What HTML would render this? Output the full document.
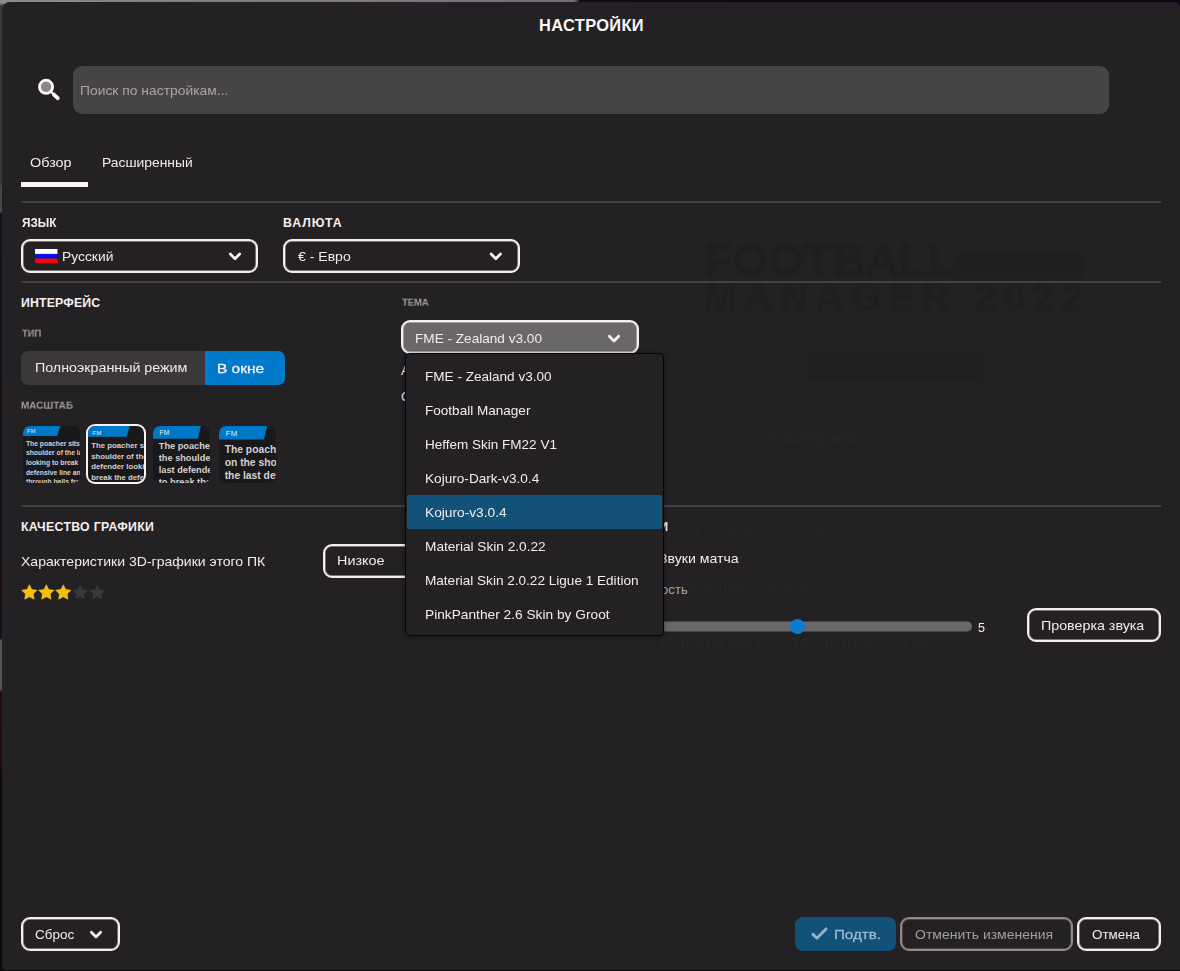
<!DOCTYPE html>
<html lang="ru">
<head>
<meta charset="utf-8">
<title>Настройки</title>
<style>
*{box-sizing:border-box;margin:0;padding:0}
html,body{width:1180px;height:971px;overflow:hidden;background:#0a090c}
body{font-family:"Liberation Sans",sans-serif;color:#f4ecec;font-size:14px;position:relative}
.abs{position:absolute;white-space:nowrap}
.tx{line-height:16px}
#bgtop{left:0;top:0;width:1180px;height:4px;background:linear-gradient(90deg,#8c8a8b 0,#7d7a7d 300px,#756f76 574px,#12091b 580px,#0e0717 1180px)}
#bgleft{left:0;top:0;width:4px;height:971px;background:linear-gradient(180deg,#8c8a8b 0,#8c8a8b 3px,#3b393c 6px,#39373a 184px,#474547 186px,#474547 212px,#0c0b0e 214px,#161418 216px,#141216 380px,#1e0a12 390px,#141216 420px,#141216 560px,#230a14 580px,#141216 610px,#141216 638px,#565456 641px,#565456 689px,#2a0c16 692px,#240a13 765px,#0a090c 775px,#0a090c 971px)}
#dialog{left:2px;top:2px;width:1179px;height:967.6px;background:#232123;border-radius:8px 8px 0 4px}
.hr{left:21px;width:1140px;height:2px;background:#434143}
.box{border:2px solid #f6eded;border-radius:9px;box-shadow:inset 0 0 0 .7px rgba(246,237,237,.55)}
.chev{width:13px;height:9px}
.thumb{top:425.5px;width:57px;height:57px;border-radius:7px;background:#19181b;overflow:hidden}
.thumb .bar{position:absolute;left:0;top:0;background:#0078c8}
.thumb .fm{position:absolute;color:#e8eef4;line-height:1;letter-spacing:.3px}
.thumb .ln{position:absolute;color:#d6d0d1;white-space:pre}
</style>
</head>
<body>
<div class="abs" id="bgtop"></div>
<div class="abs" id="bgleft"></div>
<div class="abs" id="dialog"></div>
<div class="abs" style="left:704px;top:236px;font-size:47px;line-height:48px;font-weight:bold;color:rgba(0,0,0,.095);letter-spacing:-.6px;filter:blur(1.2px)">FOOTBALL</div>
<div class="abs" style="left:958px;top:252px;width:124px;height:28px;background:rgba(0,0,0,.08);filter:blur(1.5px)"></div>
<div class="abs" style="left:704px;top:277px;font-size:40px;line-height:40px;font-weight:bold;color:rgba(0,0,0,.095);letter-spacing:6.6px;filter:blur(1.2px)">MANAGER 2022</div>
<div class="abs" style="left:807px;top:353px;width:176px;height:28px;border-radius:4px;background:rgba(0,0,0,.04)"></div>
<div class="abs" style="left:766px;top:431px;font-size:14px;font-weight:bold;color:rgba(255,255,255,.018);filter:blur(.5px)">ПОСЛЕДНЯЯ</div>
<div class="abs" style="left:644px;top:526px;font-size:17px;color:rgba(255,255,255,.02);letter-spacing:.9px;filter:blur(.6px)">НАЧАТЬ НОВУЮ ИГРУ</div>
<div class="abs" style="left:658px;top:581px;font-size:17px;color:rgba(255,255,255,.02);letter-spacing:.5px;filter:blur(.6px)">ЗАГРУЗИТЬ ИГРУ</div>
<div class="abs" style="left:660px;top:636px;font-size:16px;color:rgba(255,255,255,.02);letter-spacing:.2px;filter:blur(.6px)">ПОДКЛЮЧИТЬСЯ К ОНЛАЙН-ИГРЕ</div>
<div class="abs" style="left:660px;top:729px;font-size:15px;color:rgba(255,255,255,.02);letter-spacing:.5px">РЕЖИМ КАРЬЕРЫ</div>

<div class="abs tx" id="title" style="left:539px;top:17px;font-size:16.4px;color:#fbf6f6;font-weight:bold;letter-spacing:0.359px">НАСТРОЙКИ</div>

<!-- search -->
<svg class="abs" style="left:36px;top:77px" width="26" height="26" viewBox="0 0 26 26">
  <circle cx="10.05" cy="9.8" r="6.6" fill="#8c8788" stroke="#fdf6f5" stroke-width="2.8"/>
  <path d="M14.6 14.2 L18 17.6" stroke="#fdf6f5" stroke-width="2.2"/>
  <path d="M17.9 17.6 L21.7 21.1" stroke="#fdf6f5" stroke-width="3.9" stroke-linecap="round"/>
</svg>
<div class="abs" style="left:73px;top:66px;width:1036px;height:48px;background:#464445;border-radius:9px"></div>
<div class="abs tx" id="search" style="left:80px;top:83px;font-size:13px;color:#aaa5a7;transform:scaleX(1.0668);transform-origin:0 0">Поиск по настройкам...</div>

<!-- tabs -->
<div class="abs tx" id="tab1" style="left:30px;top:155px;font-size:13px;color:#f4ecec;transform:scaleX(1.1076);transform-origin:0 0">Обзор</div>
<div class="abs tx" id="tab2" style="left:102px;top:155px;font-size:13px;color:#f4ecec;transform:scaleX(1.0655);transform-origin:0 0">Расширенный</div>
<div class="abs" style="left:21px;top:182px;width:67px;height:5px;background:#fbf3f2"></div>
<div class="abs hr" style="top:201px"></div>

<!-- language / currency -->
<div class="abs tx" id="lang" style="left:22px;top:215px;font-size:12.3px;color:#f6efef;font-weight:bold;transform:scaleX(0.9541);transform-origin:0 0">ЯЗЫК</div>
<div class="abs tx" id="cur" style="left:283px;top:215px;font-size:12.3px;color:#f6efef;font-weight:bold;letter-spacing:0.939px">ВАЛЮТА</div>
<div class="abs box" style="left:21px;top:239px;width:237px;height:34px"></div>
<svg class="abs" style="left:35px;top:248.7px" width="22.5" height="14.4" viewBox="0 0 22.5 14.4"><rect width="22.5" height="5" fill="#ffffff"/><rect y="4.9" width="22.5" height="4.8" fill="#0a10f2"/><rect y="9.5" width="22.5" height="4.9" fill="#f5080c"/></svg>
<div class="abs tx" id="rus" style="left:62px;top:249px;font-size:13px;color:#f4ecec;transform:scaleX(1.0651);transform-origin:0 0">Русский</div>
<svg class="abs" style="left:227px;top:250px" width="17" height="13" viewBox="0 0 17 13"><path d="M3.35 4.10 L8.00 8.70 L12.65 4.10" fill="none" stroke="#fbf3f2" stroke-width="2.8" stroke-linecap="round" stroke-linejoin="round"/></svg>
<div class="abs box" style="left:283px;top:239px;width:237px;height:34px"></div>
<div class="abs tx" id="eur" style="left:298px;top:249px;font-size:13px;color:#f4ecec;transform:scaleX(1.0795);transform-origin:0 0">€ - Евро</div>
<svg class="abs" style="left:487px;top:250px" width="17" height="13" viewBox="0 0 17 13"><path d="M4.15 4.10 L8.80 8.70 L13.45 4.10" fill="none" stroke="#fbf3f2" stroke-width="2.8" stroke-linecap="round" stroke-linejoin="round"/></svg>
<div class="abs hr" style="top:281px"></div>

<!-- interface -->
<div class="abs tx" id="iface" style="left:21px;top:295px;font-size:12.3px;color:#f6efef;font-weight:bold;letter-spacing:0.17px">ИНТЕРФЕЙС</div>
<div class="abs tx" id="tip" style="left:22px;top:327px;font-size:10px;color:#a29ea0;font-weight:bold;will-change:transform;transform:scale(0.9397,0.875);transform-origin:0 0">ТИП</div>
<div class="abs" style="left:21px;top:351px;width:264px;height:33.5px;background:#3a383a;border-radius:7px"></div>
<div class="abs" style="left:205px;top:351px;width:80px;height:33.5px;background:#007bcb;border-radius:0 7px 7px 0"></div>
<div class="abs tx" id="full" style="left:35px;top:360px;font-size:13px;color:#f4ecec;transform:scaleX(1.0972);transform-origin:0 0">Полноэкранный режим</div>
<div class="abs tx" id="win" style="left:217px;top:361px;font-size:13px;color:#fdf0f1;-webkit-text-stroke:.3px #fdf0f1;transform:scaleX(1.187);transform-origin:0 0">В окне</div>
<div class="abs tx" id="scale" style="left:21px;top:399px;font-size:10px;color:#a29ea0;font-weight:bold;will-change:transform;transform:scale(0.9912,0.875);transform-origin:0 0">МАСШТАБ</div>

<!-- scale thumbnails -->
<div class="abs thumb" style="left:22.5px">
  <div class="bar" style="width:38px;height:10.5px;clip-path:polygon(0 0,100% 0,34.7px 100%,0 100%)"></div>
  <div class="fm" style="left:4.5px;top:3.6px;font-size:5.6px">FM</div>
  <div class="ln" style="left:3.4px;top:13.3px;font-size:6.8px;line-height:9.62px;font-weight:bold">The poacher sits on the
shoulder of the last defender
looking to break the
defensive line and run onto
through balls from midfield</div>
</div>
<div class="abs" style="left:86px;top:423.5px;width:60px;height:60px;border-radius:9px;background:#fbf3f2"></div>
<div class="abs thumb" style="left:88px;top:425.5px;width:56px;height:56px;border-radius:7px">
  <div class="bar" style="width:42px;height:11.3px;clip-path:polygon(0 0,100% 0,38.5px 100%,0 100%)"></div>
  <div class="fm" style="left:4.3px;top:4.3px;font-size:6px">FM</div>
  <div class="ln" style="left:3.2px;top:15.4px;font-size:7.8px;line-height:10.7px;font-weight:bold">The poacher sits on the
shoulder of the last
defender looking to
break the defensive line</div>
</div>
<div class="abs thumb" style="left:152.5px">
  <div class="bar" style="width:48.5px;height:13.2px;clip-path:polygon(0 0,100% 0,45.3px 100%,0 100%)"></div>
  <div class="fm" style="left:7px;top:4.2px;font-size:6.6px">FM</div>
  <div class="ln" style="left:6.3px;top:14px;font-size:9.2px;line-height:12.05px;font-weight:bold">The poacher sits on
the shoulder of the
last defender looking
to break the defensive</div>
</div>
<div class="abs thumb" style="left:218.5px">
  <div class="bar" style="width:48.7px;height:14.1px;clip-path:polygon(0 0,100% 0,45.5px 100%,0 100%)"></div>
  <div class="fm" style="left:7.2px;top:4.4px;font-size:7.8px">FM</div>
  <div class="ln" style="left:6.2px;top:17.6px;font-size:10.3px;line-height:13px;font-weight:bold">The poacher sits
on the shoulder of
the last defender</div>
</div>

<!-- theme -->
<div class="abs tx" id="tema" style="left:402px;top:296px;font-size:10px;color:#a29ea0;font-weight:bold;will-change:transform;transform:scale(0.9435,0.875);transform-origin:0 0">ТЕМА</div>
<div class="abs tx" style="left:401px;top:363px;font-size:13px;color:#f4ecec">А</div>
<div class="abs tx" style="left:401px;top:389px;font-size:13px;color:#f4ecec">С</div>

<div class="abs hr" style="top:505px"></div>

<!-- graphics -->
<div class="abs tx" id="gfx" style="left:21px;top:519px;font-size:12.3px;color:#f6efef;font-weight:bold;letter-spacing:0.305px">КАЧЕСТВО ГРАФИКИ</div>
<div class="abs tx" id="char" style="left:21px;top:554px;font-size:13px;color:#f4ecec;transform:scaleX(1.0794);transform-origin:0 0">Характеристики 3D-графики этого ПК</div>
<div class="abs box" style="left:323px;top:544px;width:120px;height:34px"></div>
<div class="abs tx" id="low" style="left:337px;top:553px;font-size:13px;color:#f4ecec;transform:scaleX(1.1052);transform-origin:0 0">Низкое</div>
<svg class="abs" style="left:20px;top:582px" width="88" height="20" viewBox="0 0 88 20">
  <g fill="#f5bd0c" stroke="#f8d156" stroke-width=".5" stroke-linejoin="round">
    <path id="st" d="M9.40,2.70 L11.81,7.38 L17.01,8.23 L13.30,11.97 L14.10,17.17 L9.40,14.80 L4.70,17.17 L5.50,11.97 L1.79,8.23 L6.99,7.38 Z"/>
    <path transform="translate(16.95 0)" d="M9.40,2.70 L11.81,7.38 L17.01,8.23 L13.30,11.97 L14.10,17.17 L9.40,14.80 L4.70,17.17 L5.50,11.97 L1.79,8.23 L6.99,7.38 Z"/>
    <path transform="translate(33.9 0)" d="M9.40,2.70 L11.81,7.38 L17.01,8.23 L13.30,11.97 L14.10,17.17 L9.40,14.80 L4.70,17.17 L5.50,11.97 L1.79,8.23 L6.99,7.38 Z"/>
  </g>
  <g fill="#39383a">
    <path transform="translate(50.85 0)" d="M9.40,2.70 L11.81,7.38 L17.01,8.23 L13.30,11.97 L14.10,17.17 L9.40,14.80 L4.70,17.17 L5.50,11.97 L1.79,8.23 L6.99,7.38 Z"/>
    <path transform="translate(67.8 0)" d="M9.40,2.70 L11.81,7.38 L17.01,8.23 L13.30,11.97 L14.10,17.17 L9.40,14.80 L4.70,17.17 L5.50,11.97 L1.79,8.23 L6.99,7.38 Z"/>
  </g>
</svg>

<!-- sound -->
<div class="abs tx" id="zv0" style="left:628px;top:520px;font-size:12.3px;font-weight:bold;color:#f6efef;line-height:15px">ЗВУКИ</div>
<div class="abs tx" id="zv1" style="left:659px;top:551px;font-size:13px;color:#f4ecec;transform:scaleX(1.085);transform-origin:0 0">Звуки матча</div>
<div class="abs tx" id="zv2" style="left:625px;top:582px;font-size:13px;color:#a8a3a5;letter-spacing:.1px">Громкость</div>
<svg class="abs" style="left:600px;top:615px" width="380" height="24" viewBox="0 0 380 24"><rect x="0" y="6.45" width="372" height="10" rx="5" fill="#6a6768"/></svg>
<div class="abs" style="left:790px;top:619px;width:15px;height:15px;background:#0a7bd0;border-radius:50%"></div>
<div class="abs tx" id="five" style="left:978px;top:620px;font-size:13px;color:#f4ecec;transform:scaleX(0.9664);transform-origin:0 0">5</div>
<div class="abs box" style="left:1027px;top:608px;width:134px;height:34px"></div>
<div class="abs tx" id="check" style="left:1041px;top:618px;font-size:13px;color:#f4ecec;transform:scaleX(1.0972);transform-origin:0 0">Проверка звука</div>

<!-- theme dropdown + list -->
<div class="abs box" style="left:401px;top:320px;width:238px;height:34px;background:#6a6769"></div>
<div class="abs tx" id="dd" style="left:415px;top:331px;font-size:13px;color:#f4ecec;transform:scaleX(1.0461);transform-origin:0 0">FME - Zealand v3.00</div>
<svg class="abs" style="left:606px;top:332px" width="17" height="13" viewBox="0 0 17 13"><path d="M3.35 4.30 L8.00 8.90 L12.65 4.30" fill="none" stroke="#fbf3f2" stroke-width="2.8" stroke-linecap="round" stroke-linejoin="round"/></svg>
<div class="abs" style="left:405px;top:353px;width:259px;height:283px;background:#232123;border:1px solid #050505;border-radius:5px;box-shadow:0 1px 5px rgba(0,0,0,.45)"></div>
<div class="abs" style="left:407px;top:495px;width:255px;height:34px;background:#125178;border-radius:2px"></div>
<div class="abs tx" id="i1" style="left:425px;top:369px;font-size:13px;color:#f4ecec;transform:scaleX(1.0428);transform-origin:0 0">FME - Zealand v3.00</div>
<div class="abs tx" id="i2" style="left:425px;top:403px;font-size:13px;color:#f4ecec;transform:scaleX(1.0418);transform-origin:0 0">Football Manager</div>
<div class="abs tx" id="i3" style="left:425px;top:437px;font-size:13px;color:#f4ecec;transform:scaleX(1.0393);transform-origin:0 0">Heffem Skin FM22 V1</div>
<div class="abs tx" id="i4" style="left:425px;top:471px;font-size:13px;color:#f4ecec;transform:scaleX(1.047);transform-origin:0 0">Kojuro-Dark-v3.0.4</div>
<div class="abs tx" id="i5" style="left:425px;top:505px;font-size:13px;color:#f4ecec;transform:scaleX(1.055);transform-origin:0 0">Kojuro-v3.0.4</div>
<div class="abs tx" id="i6" style="left:425px;top:539px;font-size:13px;color:#f4ecec;transform:scaleX(1.0506);transform-origin:0 0">Material Skin 2.0.22</div>
<div class="abs tx" id="i7" style="left:425px;top:573px;font-size:13px;color:#f4ecec;transform:scaleX(1.044);transform-origin:0 0">Material Skin 2.0.22 Ligue 1 Edition</div>
<div class="abs tx" id="i8" style="left:425px;top:607px;font-size:13px;color:#f4ecec;transform:scaleX(1.0555);transform-origin:0 0">PinkPanther 2.6 Skin by Groot</div>

<!-- footer -->
<div class="abs box" style="left:21px;top:917px;width:99px;height:34px"></div>
<div class="abs tx" id="reset" style="left:35px;top:927px;font-size:13px;color:#f4ecec;transform:scaleX(1.0351);transform-origin:0 0">Сброс</div>
<svg class="abs" style="left:88px;top:928px" width="17" height="13" viewBox="0 0 17 13"><path d="M3.35 4.30 L8.00 8.90 L12.65 4.30" fill="none" stroke="#fbf3f2" stroke-width="2.8" stroke-linecap="round" stroke-linejoin="round"/></svg>
<div class="abs" style="left:795px;top:917px;width:101px;height:34px;background:#125178;border-radius:8px"></div>
<svg class="abs" style="left:810px;top:926px" width="18" height="15" viewBox="0 0 18 15"><path d="M3 8.4 L6.9 12.2 L16 2.9" fill="none" stroke="#93b3c8" stroke-width="2.9" stroke-linecap="round" stroke-linejoin="round"/></svg>
<div class="abs tx" id="ok" style="left:834px;top:927px;font-size:13px;color:#9dbace;-webkit-text-stroke:.3px #9dbace;transform:scaleX(1.1615);transform-origin:0 0">Подтв.</div>
<div class="abs box" style="left:900px;top:917px;width:173px;height:34px;border-color:#8e8a8c;box-shadow:inset 0 0 0 .7px rgba(142,138,140,.5)"></div>
<div class="abs tx" id="undo" style="left:915px;top:927px;font-size:13px;color:#a39fa1;transform:scaleX(1.0772);transform-origin:0 0">Отменить изменения</div>
<div class="abs box" style="left:1077px;top:917px;width:84px;height:34px"></div>
<div class="abs tx" id="cancel" style="left:1092px;top:927px;font-size:13px;color:#f4ecec;transform:scaleX(1.0307);transform-origin:0 0">Отмена</div>
</body>
</html>
